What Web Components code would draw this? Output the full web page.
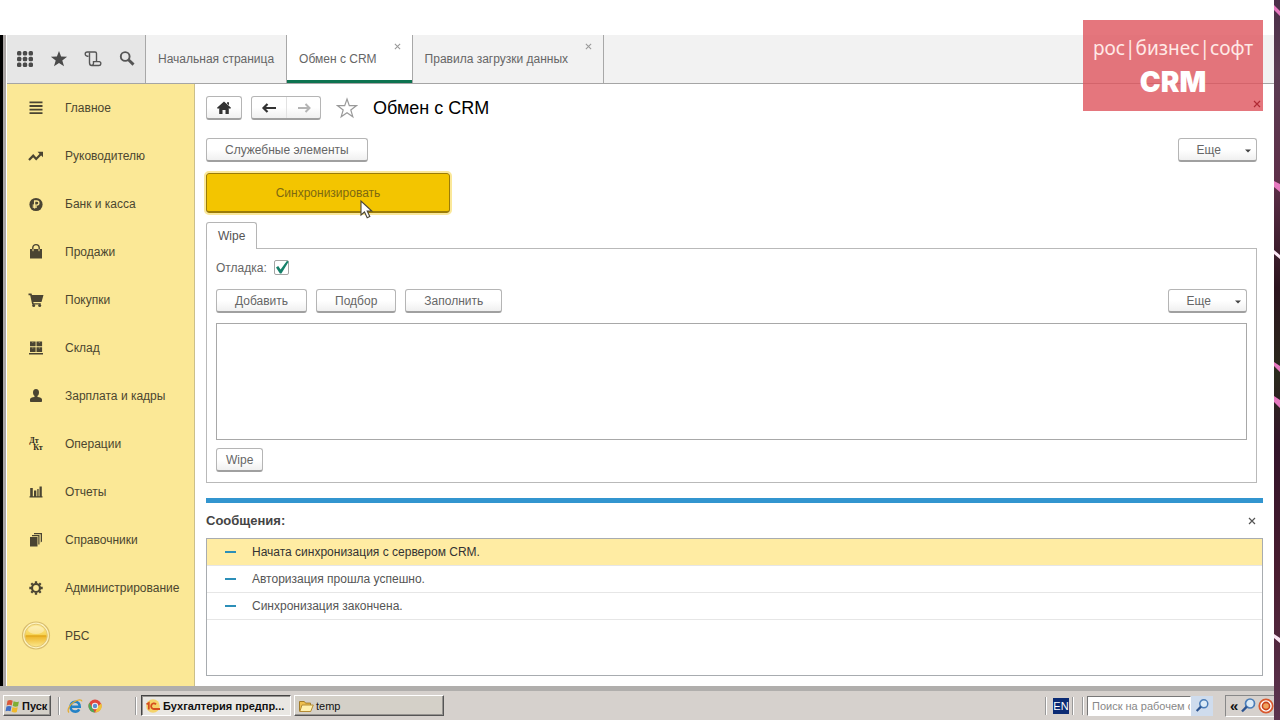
<!DOCTYPE html>
<html lang="ru">
<head>
<meta charset="utf-8">
<title>Обмен с CRM</title>
<style>
  body { margin: 0; background: #fff; font: 12px/16px "Liberation Sans", Arial, sans-serif; color: #505050; }
</style>
</head>
<body>
<desktop-screen>
  <app-window>
    <tool-strip slot="top"></tool-strip>
    <app-tab slot="top" label="Начальная страница"></app-tab>
    <app-tab slot="top" label="Обмен с CRM" active closable></app-tab>
    <app-tab slot="top" label="Правила загрузки данных" closable></app-tab>
    <side-nav slot="side">
      <nav-item icon="menu">Главное</nav-item>
      <nav-item icon="trend">Руководителю</nav-item>
      <nav-item icon="ruble">Банк и касса</nav-item>
      <nav-item icon="bag">Продажи</nav-item>
      <nav-item icon="cart">Покупки</nav-item>
      <nav-item icon="boxes">Склад</nav-item>
      <nav-item icon="person">Зарплата и кадры</nav-item>
      <nav-item icon="dtkt">Операции</nav-item>
      <nav-item icon="chart">Отчеты</nav-item>
      <nav-item icon="books">Справочники</nav-item>
      <nav-item icon="gear">Администрирование</nav-item>
      <nav-item icon="coin">РБС</nav-item>
    </side-nav>
    <exchange-form></exchange-form>
  </app-window>
  <task-bar slot="taskbar"></task-bar>
  <brand-mark slot="overlay"></brand-mark>
</desktop-screen>

<script>
const ICONS = {
  grid: [18, '<g fill="#4a4a4a"><rect x="1" y="1" width="4.4" height="4.4" rx="1.5"/><rect x="6.8" y="1" width="4.4" height="4.4" rx="1.5"/><rect x="12.6" y="1" width="4.4" height="4.4" rx="1.5"/><rect x="1" y="6.8" width="4.4" height="4.4" rx="1.5"/><rect x="6.8" y="6.8" width="4.4" height="4.4" rx="1.5"/><rect x="12.6" y="6.8" width="4.4" height="4.4" rx="1.5"/><rect x="1" y="12.6" width="4.4" height="4.4" rx="1.5"/><rect x="6.8" y="12.6" width="4.4" height="4.4" rx="1.5"/><rect x="12.6" y="12.6" width="4.4" height="4.4" rx="1.5"/></g>'],
  star: [18, '<path fill="#4a4a4a" d="M9 1l2.1 5.6 6 .2-4.800 3.700 1.700 5.800L9 13l-5 3.300 1.700-5.800L.9 6.800l6-.2z"/>'],
  scroll: [18, '<g fill="none" stroke="#555" stroke-width="1.400"><path d="M4.500 6.200H3.300a1.900 1.900 0 0 1 0-4.200H11c1 0 1.500.6 1.500 1.600v7.600"/><path d="M5.500 2.500v10.200c0 1.800 1 2.800 2.400 2.800h7a2 2 0 0 0 .6-3.900H9.500v1.600c0 1.300-.5 2-1.600 2.300"/></g>'],
  search: [18, '<g fill="none" stroke="#555"><circle cx="7.200" cy="6.500" r="4.400" stroke-width="1.900"/><path d="M10.500 9.800l5 4.800" stroke-width="2.900"/></g>'],
  menu: [18, '<path fill="#4a4432" d="M2.500 2.500h13v1.800h-13zM2.500 6.100h13v1.800h-13zM2.500 9.700h13v1.800h-13zM2.500 13.300h13v1.800h-13z"/>'],
  trend: [18, '<path fill="none" stroke="#4a4432" stroke-width="2.200" d="M2 13l4.200-4.300 3 3.300 5-5.200"/><path fill="#4a4432" d="M10.500 4.800H16v5.500z"/>'],
  ruble: [18, '<circle cx="9" cy="9.500" r="6.600" fill="#4a4432"/><path fill="none" stroke="#fbe795" stroke-width="1.300" d="M7.600 13.500V6h2.200a2 2 0 0 1 0 4.200H5.700M5.700 12h4.200"/>'],
  bag: [18, '<path fill="#4a4432" d="M3 6h12v9.500H3z"/><path fill="none" stroke="#4a4432" stroke-width="1.400" d="M5.800 6.500V4.800a3.200 3.200 0 0 1 6.400 0v1.700"/><path fill="none" stroke="#fbe795" d="M6 6v2.200M12 6v2.200"/>'],
  cart: [18, '<path fill="#4a4432" d="M1.500 2.500h3l.5 1.600h11.500l-2 6.900H6.300l.3 1.200h7.200v1.300H5.200L3.200 4.200H1.500z"/><circle cx="6.700" cy="14.500" r="1.500" fill="#4a4432"/><circle cx="12.700" cy="14.500" r="1.500" fill="#4a4432"/>'],
  boxes: [18, '<path fill="#4a4432" d="M3 2.500h5.600v4.800H3zM9.500 2.500h5.600v4.800H9.500zM3 8.200h5.600V13H3zM9.500 8.200h5.600V13H9.500zM2 14h14v1.600H2z"/><path stroke="#a89c68" stroke-width=".8" d="M5.800 2.500v1.500M12.300 2.500v1.500M5.800 8.200v1.500M12.300 8.200v1.500"/>'],
  person: [18, '<ellipse cx="9" cy="5.500" rx="3" ry="3.600" fill="#4a4432"/><path fill="#4a4432" d="M7.500 8h3v2c2.500.2 4.500.9 4.500 2.600v1.500c0 .6-.4 1-1 1H4c-.6 0-1-.4-1-1v-1.500C3 10.900 5 10.200 7.500 10z"/>'],
  chart: [18, '<path fill="#4a4432" d="M3.200 5h2.600v8.500H3.200zM7 7.500h2.300v6H7zM10.300 6h1.300v7.500h-1.300zM12.500 3.500h2.300v10h-2.300zM2.500 13.300h13v1.300h-13z"/>'],
  books: [18, '<path fill="#4a4432" d="M3 6h7.500v9.500H3zM5 4h7.500v9.500h-1.200V5.200H5zM7 2h8v8.500l-1.300 1V3.200H7z"/>'],
  gear: [18, '<circle cx="9" cy="9" r="4" fill="none" stroke="#4a4432" stroke-width="2.200"/><path stroke="#4a4432" stroke-width="2.300" d="M9 2.300v2M9 13.700v2M2.300 9h2M13.700 9h2M4.300 4.300l1.400 1.400M12.300 12.300l1.400 1.400M4.300 13.700l1.400-1.400M12.300 5.700l1.400-1.400"/>'],
  coin: [30, '<defs><linearGradient id="c" x2="0" y2="1"><stop offset="0" stop-color="#fdeb9a"/><stop offset=".45" stop-color="#f7d558"/><stop offset=".55" stop-color="#eeb72c"/><stop offset="1" stop-color="#fce88c"/></linearGradient></defs><circle cx="15" cy="14.500" r="13.500" fill="#fdf3c0" stroke="#d8bd6e" stroke-width="1.200"/><circle cx="15" cy="14.500" r="11.300" fill="url(#c)" stroke="#e3c671"/><path d="M5 15h20" stroke="#e0a51c" stroke-width="1.200"/><ellipse cx="15" cy="9" rx="8" ry="4" fill="#fff" opacity=".35"/>'],
  home: [18, '<path fill="#333" d="M9 2.500l7 6.300-1 1.100-1.200-.9v6H10.500v-4h-3v4H4.200V9L3 9.900 2 8.800z"/><path fill="#333" d="M12 3.200h2v3l-2-1.700z"/>'],
  back: [18, '<path fill="none" stroke="#333" stroke-width="2.200" d="M16 9H4M7.500 5L3.500 9l4 4"/>'],
  forward: [18, '<path fill="none" stroke="#b4b4b4" stroke-width="2" d="M3 9h11M10.500 5l4 4-4 4"/>'],
  favorite: [22, '<path fill="#fff" stroke="#999" stroke-width="1.200" d="M11 2l2.300 6.600 7 .1-5.500 4.300 2 6.700L11 15.700l-5.800 4 2-6.700L1.700 8.700l7-.1z"/>'],
  close: [8, '<path fill="none" stroke="currentColor" stroke-width="1.200" d="M1 1l6 6M7 1L1 7"/>'],
  caret: [6, '<path fill="#444" d="M0 2.500h6L3 5.500z"/>'],
  tick: [16, '<path fill="#16806a" d="M2 7.500l2.200-1.400 2.400 3.400L13 .800l1.600.9L7.400 13.500H5.900z"/>'],
  pointer: [22, '<path fill="#fff" stroke="#4b4639" stroke-width="1.100" d="M3 2v14l3.500-3 2.700 5.800 2.600-1.200-2.600-5.600h4.600z"/>'],
  windows: [16, '<path fill="#d9583a" d="M2.500 2.700c1.800-1 3.600-.9 5.200 0L6.700 7.500c-1.600-.8-3.300-.9-5 0z"/><path fill="#7fae35" d="M8.600 3.200c1.800.9 3.500 1 5.300.2L13 8.200c-1.800.7-3.600.6-5.300-.3z"/><path fill="#3f6fc6" d="M1.500 8.500c1.600-.8 3.400-.8 5 0l-1 4.800c-1.600-.8-3.300-.9-5 0z"/><path fill="#f0b92b" d="M7.500 9c1.700.9 3.400 1 5.200.3l-.9 4.600c-1.800.8-3.500.7-5.200-.2z"/>'],
  explorer: [16, '<path fill="none" stroke="#2382c6" stroke-width="2.600" d="M3.500 8.800h9.200c0-3-1.800-5-4.500-5s-4.700 2-4.700 5 2 4.800 4.700 4.800c1.800 0 3.200-.7 4-2.200"/><path fill="none" stroke="#e4ad32" stroke-width="1.300" d="M2 14.500C-.5 12 3 6.500 7 4s7.500-3 8-.6"/>'],
  chrome: [16, '<circle cx="8" cy="8" r="6.500" fill="#e2473c"/><path fill="#4ea85a" d="M2.400 4.700L8 14.500A6.500 6.500 0 0 1 2.400 4.700z"/><path fill="#efc43b" d="M8 14.500L11 8l3.300-2.500A6.500 6.500 0 0 1 8 14.500z"/><circle cx="8" cy="8" r="3.200" fill="#eef1f5"/><circle cx="8" cy="8" r="2.200" fill="#5c8fd0"/>'],
  onec: [16, '<circle cx="8" cy="8" r="6.800" fill="#f4d36a"/><g fill="none" stroke="#d54d1e" stroke-width="1.800"><path d="M1.500 6.300L3.800 5v6.500M11 6.300A2.800 2.800 0 1 0 9 11h6"/></g>'],
  folder: [16, '<path fill="#eebf4e" stroke="#a37b26" d="M1.500 3.500h4.800l1.200 1.600h5v8h-11z"/><path fill="#fff0ae" stroke="#b48b34" d="M4 7h11.300l-2.600 6.500H1.800z"/>'],
  lens: [18, '<circle cx="11" cy="6.500" r="4.500" fill="#dcebf7" stroke="#4a7db8" stroke-width="1.700"/><path stroke="#2d5490" stroke-width="2.400" d="M7.800 9.700L3 14.500"/>'],
  target: [16, '<circle cx="8" cy="8" r="6.700" fill="#fff" stroke="#d9592f" stroke-width="1.800"/><circle cx="8" cy="8" r="3.600" fill="#f0a35f" stroke="#c9421d" stroke-width="1.600"/>']
};

function svg(name, size) {
  const [box, body] = ICONS[name];
  const s = size || box;
  return `<svg width="${s}" height="${s}" viewBox="0 0 ${box} ${box}" aria-hidden="true">${body}</svg>`;
}

function define(tag, css, markup) {
  customElements.define(tag, class extends HTMLElement {
    constructor() {
      super();
      const t = document.createElement('template');
      t.innerHTML = `<style>*{box-sizing:border-box}svg{display:block;flex:none}button{font:inherit;color:inherit}${css}</style>` +
        (typeof markup === 'function' ? markup(this) : markup);
      this.attachShadow({ mode: 'open' }).append(t.content.cloneNode(true));
    }
  });
}

/* Desktop: the application and task bar, with a strip of wallpaper on the right */
define('desktop-screen', `
  :host { display: flex; min-height: 100vh; position: relative; }
  .screen { flex: 1; min-width: 0; display: flex; flex-direction: column; padding-top: 35px; }
  ::slotted(app-window) { flex: 1; }
  .wall { width: 6px; flex: none; background: #351b2c; display: grid; overflow: hidden; }
  .wall svg { width: 6px; height: 100%; }
`, `<div class="screen"><slot></slot><slot name="taskbar"></slot></div>
  <div class="wall"><svg viewBox="0 0 6 720" preserveAspectRatio="none">
    <defs><linearGradient id="w" x2="0" y2="1"><stop offset="0" stop-color="#4a2f48"/><stop offset=".1" stop-color="#5a3c52"/><stop offset=".25" stop-color="#5e2f49"/><stop offset=".4" stop-color="#2c141e"/><stop offset=".52" stop-color="#2a2a1c"/><stop offset=".62" stop-color="#33142a"/><stop offset=".8" stop-color="#4a1d30"/><stop offset="1" stop-color="#5c3550"/></linearGradient></defs>
    <path fill="url(#w)" d="M0 0h6v720H0z"/>
    <path fill="#e77ac0" d="M0 5l6 6v5l-6-6zM0 181l6 3v8l-6-5zM0 362l6 4v6l-6-6zM0 396l6 4v8l-6-6z"/>
    <path fill="#fbe6f4" d="M0 250l6 5v4l-6-5zM0 634l6 4v5l-6-5z"/>
  </svg></div><slot name="overlay"></slot>`);

define('brand-mark', `
  :host { position: absolute; top: 20px; right: 17px; width: 180px; height: 91px; background: rgba(222,84,92,.8); color: #fff; text-align: center; padding-top: 14px; box-sizing: border-box; }
  .name { font: 19px/28px "Noto Sans", sans-serif; color: #ffe9e6; }
  .crm { font: 900 28px/40px Inter, "DejaVu Sans", sans-serif; }
  svg { position: absolute; right: 2px; bottom: 3px; color: #b02a34; }
`, `<div class="name">рос|бизнес|софт</div><div class="crm">CRM</div>${svg('close')}`);

define('app-window', `
  :host { display: flex; flex-direction: column; border-left: 3px solid #000; box-shadow: inset 3px 0 #aaa5a3; padding-left: 4px; box-sizing: border-box; }
  header { display: flex; height: 49px; background: #f2f2f2; border-bottom: 1px solid #a5a5a5; }
  .body { flex: 1; display: flex; }
  slot:not([name])::slotted(*) { flex: 1; min-width: 0; }
`, `<header><slot name="top"></slot></header><div class="body"><slot name="side"></slot><slot></slot></div>`);

define('tool-strip', `
  :host { display: flex; align-items: center; gap: 3px; padding: 0 3px 0 2px; background: #e6e6e6; border-right: 1px solid #a8a8a8; }
  button { border: 0; background: none; padding: 0; width: 31px; height: 32px; display: grid; place-items: center; }
`, `<button aria-label="Меню">${svg('grid')}</button><button aria-label="Избранное">${svg('star')}</button><button aria-label="История">${svg('scroll')}</button><button aria-label="Поиск">${svg('search')}</button>`);

define('app-tab', `
  :host { display: flex; position: relative; border-right: 1px solid #a8a8a8; color: #666; height: 48px; }
  .tab { border: 0; background: none; padding: 0 12px; white-space: nowrap; }
  :host([closable]) .tab { padding-right: 35px; }
  :host([active]) { background: #fff; box-shadow: inset 0 -3px #0d7350; }
  .x { position: absolute; top: 8px; right: 11px; padding: 0; border: 0; background: none; color: #999; }
`, el => `<button class="tab">${el.getAttribute('label')}</button>` +
  (el.hasAttribute('closable') ? `<button class="x" aria-label="Закрыть">${svg('close', 7)}</button>` : ''));

define('side-nav', `
  :host { display: block; width: 188px; background: #fbe896; border-right: 1px solid #cbbf8a; box-sizing: border-box; color: #4b4630; }
`, `<nav><slot></slot></nav>`);

define('nav-item', `
  :host { display: block; }
  a { display: flex; align-items: center; height: 48px; color: inherit; text-decoration: none; }
  .ic { width: 58px; display: grid; place-items: center; font: bold 8px/7px "Liberation Serif", serif; color: #2e2a1c; }
  .ic span:first-child { padding-right: 4px; }
  .ic span + span { padding-left: 4px; }
`, el => {
  const n = el.getAttribute('icon');
  return `<a href="#"><span class="ic">${n === 'dtkt' ? '<span>Дт</span><span>Кт</span>' : svg(n)}</span><slot></slot></a>`;
});

define('push-button', `
  :host { display: inline-flex; height: 24px; color: #666; }
  button { flex: 1; display: flex; align-items: center; justify-content: center; border: 1px solid #b5b5b5; border-bottom: 2px solid #a0a0a0; border-radius: 3px; background: linear-gradient(#fff 50%, #f0f0f0); padding: 0 18px; white-space: nowrap; }
  :host([small]) button { padding: 0 9px; }
  :host([icon]) button { padding: 0 8px; }
  :host([menu]) button { padding: 0 5px 0 18px; gap: 24px; }
`, el => `<button${el.hasAttribute('icon') ? ' aria-label="Начало"' : ''}${el.hasAttribute('menu') ? ' aria-haspopup="menu"' : ''}>${el.hasAttribute('icon') ? svg(el.getAttribute('icon')) : '<slot></slot>'}${el.hasAttribute('menu') ? svg('caret') : ''}</button>`);

define('history-buttons', `
  :host { display: flex; height: 24px; border: 1px solid #b5b5b5; border-bottom: 2px solid #a0a0a0; border-radius: 3px; background: linear-gradient(#fff 50%, #f0f0f0); box-sizing: border-box; }
  button { width: 34px; border: 0; padding: 0; background: none; display: grid; place-items: center; }
  button + button { border-left: 1px solid #e2e2e2; }
`, `<button aria-label="Назад">${svg('back')}</button><button aria-label="Вперед" disabled>${svg('forward')}</button>`);

define('check-field', `
  :host { display: flex; }
  label { display: flex; align-items: center; gap: 7px; color: #666; }
  .box { display: grid; }
  .box > * { grid-area: 1 / 1; }
  input { appearance: none; margin: 0; width: 15px; height: 15px; border: 1px solid #a5a5a5; border-radius: 2px; background: #fff; }
  svg { pointer-events: none; }
  input:not(:checked) + svg { visibility: hidden; }
`, `<label><slot></slot><span class="box"><input type="checkbox" checked>${svg('tick')}</span></label>`);

define('message-row', `
  :host { display: flex; align-items: center; gap: 16px; height: 27px; padding-left: 18px; border-bottom: 1px solid #e6e6e6; box-sizing: border-box; color: #555; }
  i { width: 11px; height: 2px; background: #2c8fb8; }
  :host([current]) { background: #ffeca3; color: #333; }
`, `<i></i><slot></slot>`);

define('message-panel', `
  :host { display: flex; flex-direction: column; flex: 1; border-top: 5px solid #3295cf; }
  header { display: flex; align-items: center; justify-content: space-between; height: 35px; padding-right: 7px; }
  h2 { margin: 0; font: bold 13px/16px "Liberation Sans", Arial, sans-serif; color: #444; }
  button { border: 0; background: none; padding: 0; color: #555; }
  .list { flex: 1; border: 1px solid #a8acb0; }
`, `<header><h2>Сообщения:</h2><button aria-label="Закрыть">${svg('close')}</button></header>
  <div class="list" role="log"><slot></slot></div>`);

define('exchange-form', `
  :host { display: flex; flex-direction: column; padding: 12px 11px 10px; background: #fff; box-sizing: border-box; }
  .row { display: flex; align-items: center; gap: 9px; }
  .head { height: 24px; }
  .fav { border: 0; background: none; padding: 0 6px; }
  h1 { margin: 0; font: 18px/24px "Liberation Sans", Arial, sans-serif; color: #000; }
  .service { margin-top: 18px; padding-right: 6px; }
  .push { margin-left: auto; }
  .sync { position: relative; align-self: flex-start; width: 244px; height: 40px; margin: 11px 0 9px; border: 1px solid #9b7c08; border-bottom-width: 2px; border-radius: 3px; background: #f3c500; color: #7d6912; outline: 2px solid #fbe899; padding: 0; }
  .pointer { position: absolute; left: 151px; top: 25px; }
  .tab { align-self: flex-start; height: 27px; margin-bottom: -1px; padding: 0 11px; border: 1px solid #b5b5b5; border-bottom: 0; border-radius: 3px 3px 0 0; background: #fff; color: #555; position: relative; }
  .page { margin: 0 6px 15px 0; border: 1px solid #b9b9b9; padding: 11px 9px 10px; display: flex; flex-direction: column; align-items: stretch; }
  .tools { margin: 13px 0 10px; }
  .grid { height: 117px; border: 1px solid #a8a8a8; margin-bottom: 8px; }
`, `<div class="row head"><push-button icon="home"></push-button><history-buttons></history-buttons>
    <button class="fav" aria-label="В избранное">${svg('favorite')}</button><h1>Обмен с CRM</h1></div>
  <div class="row service"><push-button>Служебные элементы</push-button><push-button class="push" menu>Еще</push-button></div>
  <button class="sync">Синхронизировать<span class="pointer">${svg('pointer')}</span></button>
  <button class="tab" role="tab">Wipe</button>
  <section class="page">
    <check-field>Отладка:</check-field>
    <div class="row tools"><push-button>Добавить</push-button><push-button>Подбор</push-button><push-button>Заполнить</push-button><push-button class="push" menu>Еще</push-button></div>
    <div class="grid"></div>
    <div class="row"><push-button small>Wipe</push-button></div>
  </section>
  <message-panel>
    <message-row current>Начата синхронизация с сервером CRM.</message-row>
    <message-row>Авторизация прошла успешно.</message-row>
    <message-row>Синхронизация закончена.</message-row>
  </message-panel>`);

define('task-button', `
  :host { display: block; width: 150px; height: 21px; }
  button { display: flex; align-items: center; gap: 2px; width: 100%; height: 100%; padding: 0 3px; border: 1px solid; border-color: #fff #555 #555 #fff; background: #d4d0c8; box-shadow: inset -1px -1px #969390; color: #111; text-align: left; white-space: nowrap; }
  :host([start]) { width: 48px; }
  :host([start]) button { padding: 0 1px; gap: 1px; font-weight: bold; }
  :host([pressed]) button { border-color: #444 #fff #fff #444; background: #e9e7e3; box-shadow: inset 1px 1px #969390; font-weight: bold; }
`, el => `<button>${svg(el.getAttribute('icon'))}<span><slot></slot></span></button>`);

define('task-bar', `
  :host { display: flex; align-items: center; height: 34px; padding-left: 3px; background: #d6d1cd; border-top: 5px solid #b0aeac; box-sizing: border-box; font: 11px/16px "Liberation Sans", Arial, sans-serif; color: #111; }
  .sep { width: 2px; height: 18px; border-left: 1px solid #999; border-right: 1px solid #fff; }
  .quick { display: flex; gap: 4px; margin: 0 32px 0 7px; }
  .quick button { border: 0; background: none; padding: 0; }
  .tasks { display: flex; gap: 3px; margin-left: 4px; flex: 1; }
  task-button[start] { margin-right: 7px; }
  .lang { width: 16px; height: 16px; margin: 0 3px 0 6px; background: #0b2b74; color: #fff; text-align: center; }
  .lang + .sep { margin-right: 8px; }
  form { display: flex; margin: 0 12px 0 3px; width: 126px; }
  input { flex: 1; min-width: 0; height: 20px; padding: 0 0 0 4px; border: 1px solid; border-color: #777 #fff #fff #777; background: #fff; font: inherit; }
  input::placeholder { color: #888; }
  form button { width: 22px; border: 0; padding: 0; background: #cfdced; display: grid; place-items: center; }
  .tray { display: flex; align-items: center; height: 22px; padding-left: 4px; border: 1px solid; border-color: #888 #d6d1cd #fff #888; border-right: 0; gap: 1px; }
  .tray span { width: 8px; font: bold 15px/16px "Liberation Sans", Arial, sans-serif; }
`, `<task-button start icon="windows">Пуск</task-button><div class="sep"></div>
  <div class="quick"><button aria-label="Internet Explorer">${svg('explorer')}</button><button aria-label="Chrome">${svg('chrome')}</button></div>
  <div class="sep"></div>
  <div class="tasks"><task-button pressed icon="onec">Бухгалтерия предпр...</task-button><task-button icon="folder">temp</task-button></div>
  <div class="sep"></div><span class="lang">EN</span><div class="sep"></div><div class="sep"></div>
  <form><input placeholder="Поиск на рабочем столе" aria-label="Поиск на рабочем столе"><button type="button" aria-label="Найти">${svg('lens', 16)}</button></form>
  <div class="tray"><span>«</span>${svg('lens')}${svg('target')}</div>`);
</script>
</body>
</html>
